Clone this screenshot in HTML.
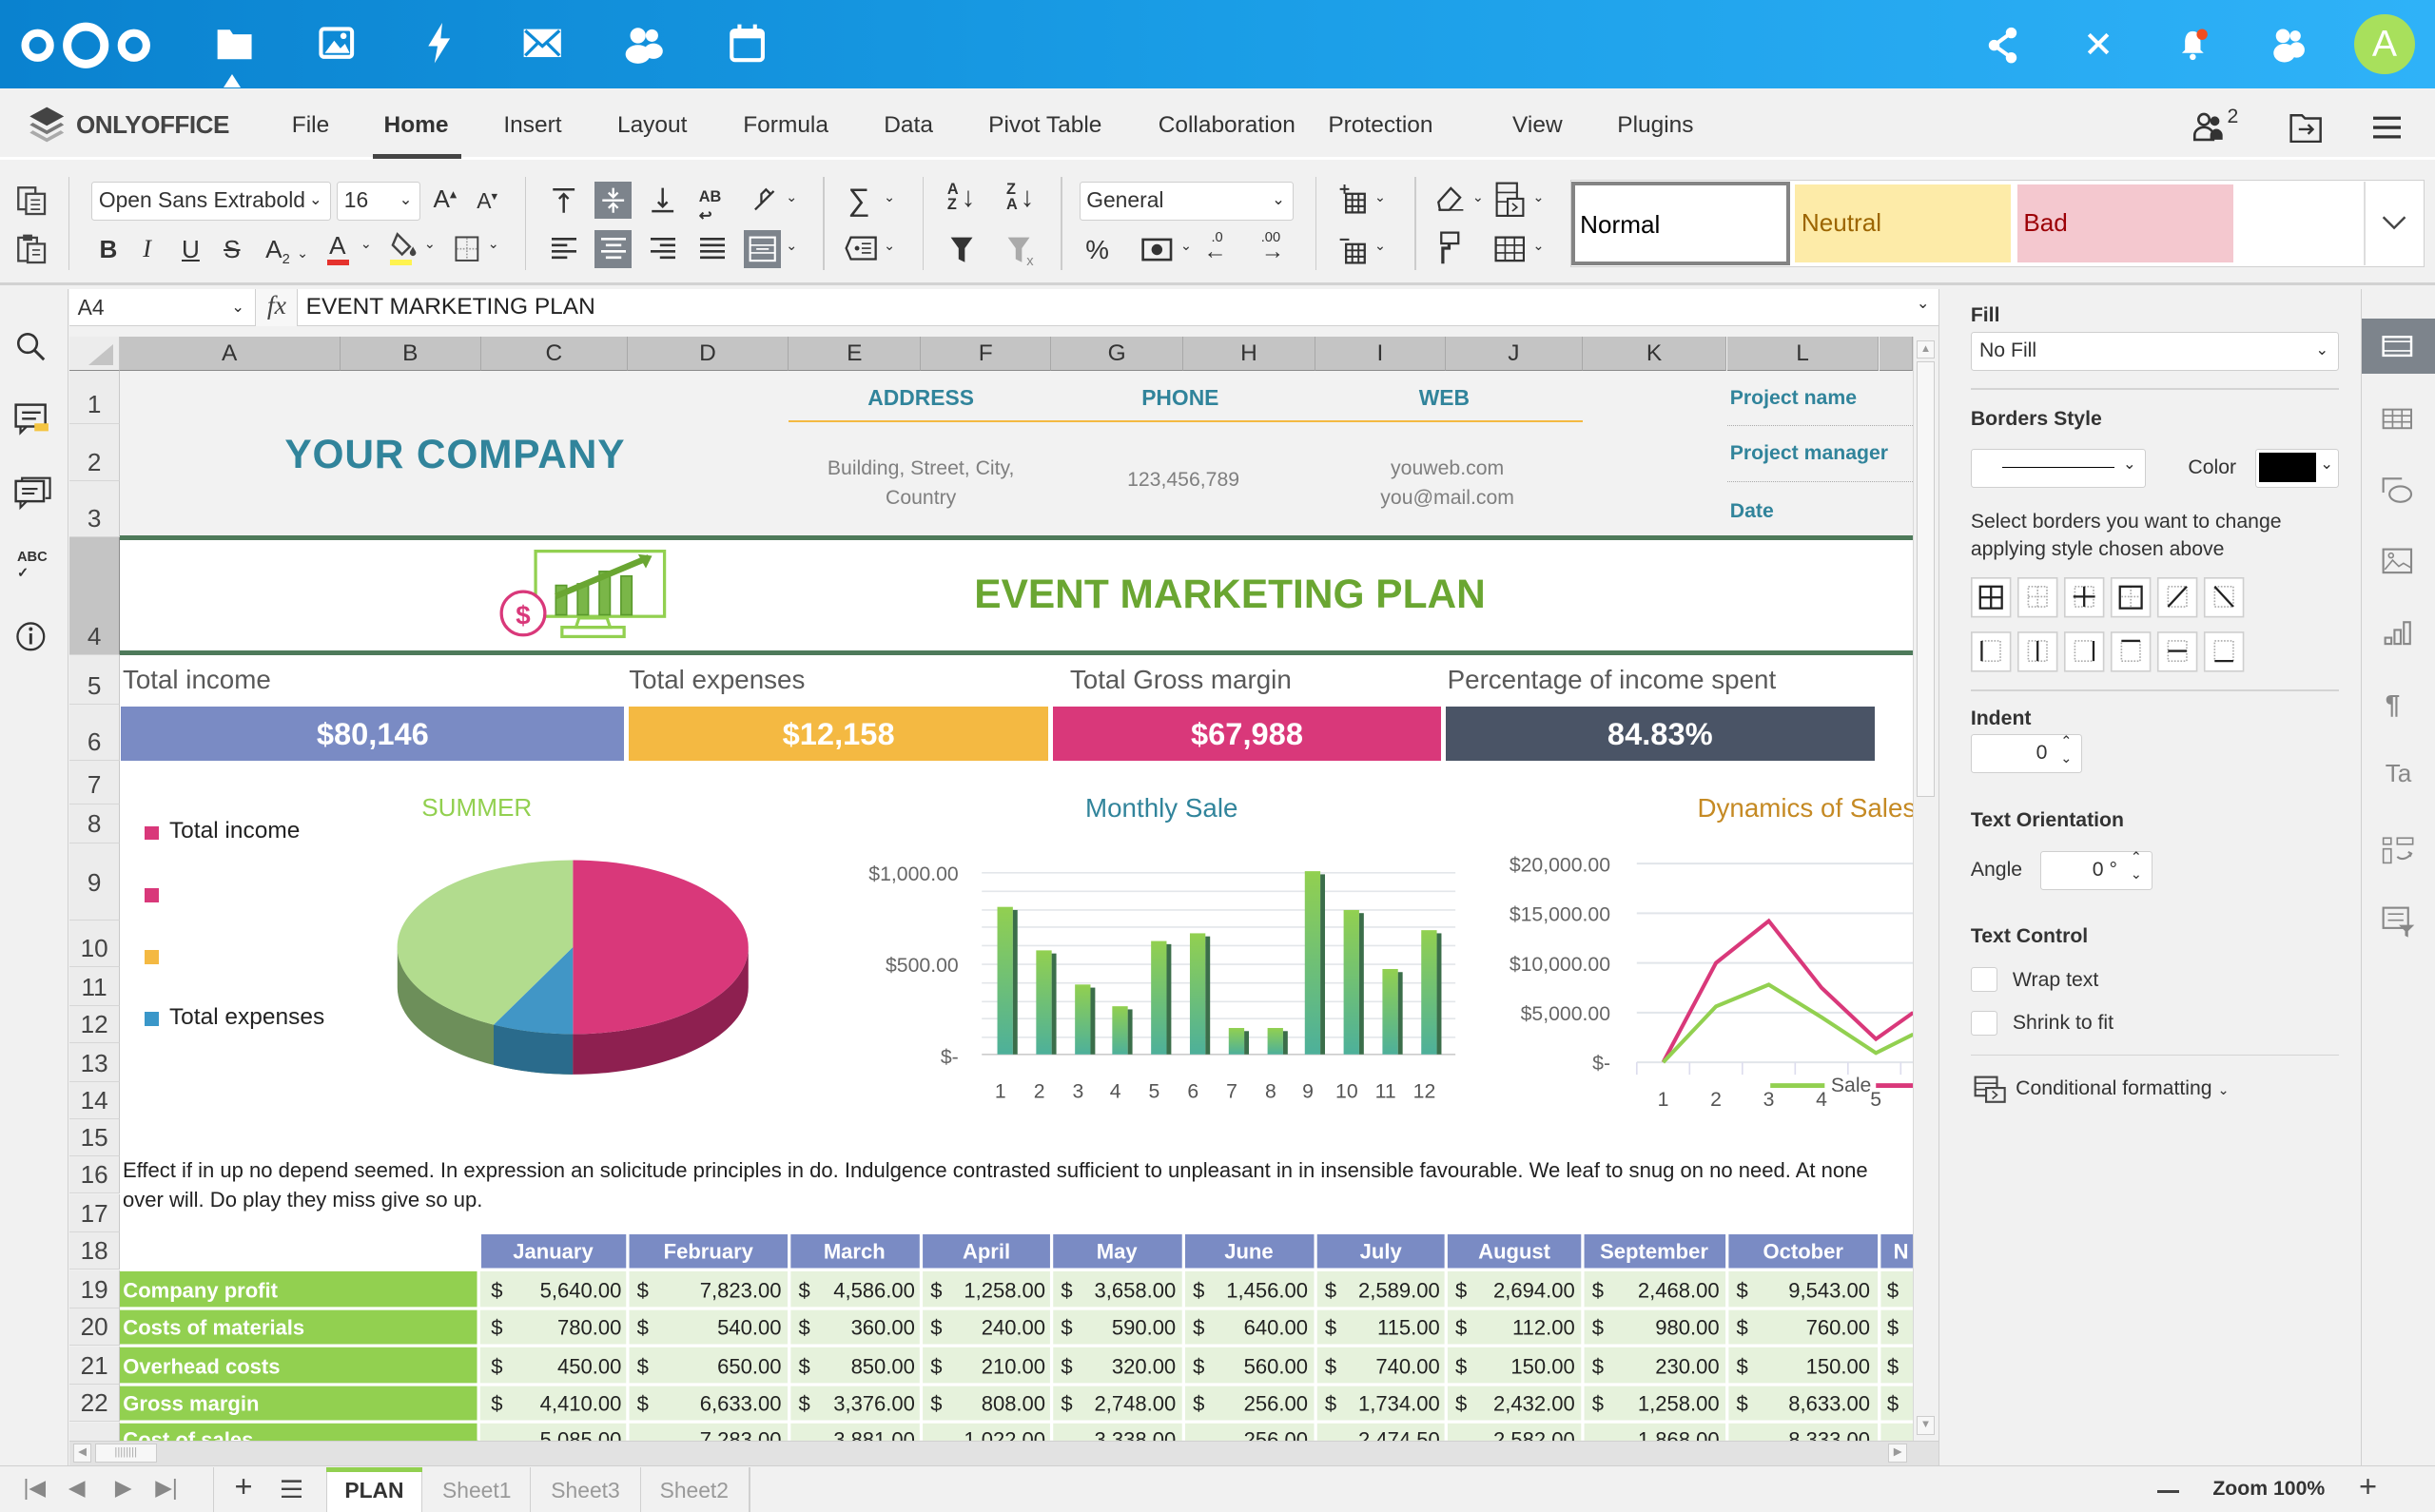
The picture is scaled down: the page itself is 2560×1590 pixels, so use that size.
<!DOCTYPE html>
<html><head><meta charset="utf-8"><style>
*{margin:0;padding:0;box-sizing:border-box}
html,body{width:2560px;height:1590px;overflow:hidden;background:#f1f1f1}
#w{zoom:1.63265;width:1568px;height:974px;position:relative;font-family:"Liberation Sans",sans-serif;color:#333;overflow:hidden}
.a{position:absolute}
.t{position:absolute;white-space:nowrap}
.c{transform:translateX(-50%)}
.rh{position:absolute;left:45px;width:32px;background:#ececec;border-bottom:1px solid #d6d6d6;border-right:1px solid #c8c8c8;font-size:16px;color:#444;text-align:center;display:flex;align-items:flex-end;justify-content:center;padding-bottom:2px}
.ch{position:absolute;top:217px;height:22px;background:#c4c4c4;border-right:1px solid #a8a8a8;border-bottom:1px solid #8a8a8a;font-size:15px;color:#333;text-align:center;line-height:22px}
.mn{position:absolute;top:72px;font-size:15px;color:#333}
.num{position:absolute;font-size:13.5px;color:#222}
.box{position:absolute;background:#fff;border:1px solid #cfcfcf;border-radius:2px}
.bb{position:absolute;width:24px;height:24px;background:#fff;border:1px solid #cfcfcf;border-radius:2px}
.lbl{position:absolute;font-size:13px;font-weight:bold;color:#333}
.ic{position:absolute}
</style></head><body><div id="w">

<!-- top nextcloud bar -->
<div class="a" style="left:0;top:0;width:1568px;height:57px;background:linear-gradient(90deg,#0a82cf,#1a9de6 50%,#2fb2f8)"></div>
<svg class="ic" style="left:12px;top:12px" width="86" height="34" viewBox="0 0 86 34"><circle cx="12" cy="17" r="8" fill="none" stroke="#fff" stroke-width="5"/><circle cx="43" cy="17" r="12" fill="none" stroke="#fff" stroke-width="5.5"/><circle cx="74" cy="17" r="8" fill="none" stroke="#fff" stroke-width="5"/></svg>
<svg class="ic" style="left:139px;top:17px" width="24" height="22"><path d="M1 2h8l2 3h12v16H1z" fill="#fff"/></svg>
<div class="a" style="left:144px;top:48px;width:0;height:0;border-left:6px solid transparent;border-right:6px solid transparent;border-bottom:9px solid #fff"></div>
<svg class="ic" style="left:205px;top:17px" width="24" height="22"><rect x="1.5" y="1.5" width="20" height="18" rx="2" fill="none" stroke="#fff" stroke-width="2.5"/><path d="M4 17l6-8 4 5 3-3 3 6z" fill="#fff"/><circle cx="16" cy="6" r="2" fill="#fff"/></svg>
<svg class="ic" style="left:274px;top:15px" width="18" height="26"><path d="M11 0L2 15h6l-2 11 10-16h-6z" fill="#fff"/></svg>
<svg class="ic" style="left:336px;top:18px" width="26" height="20"><rect x="1" y="1" width="24" height="18" fill="#fff"/><path d="M2 2l11 10 11-10M2 18l8-8M24 18l-8-8" stroke="#0d8ad6" stroke-width="2" fill="none"/></svg>
<svg class="ic" style="left:402px;top:16px" width="26" height="26"><circle cx="9" cy="7" r="5" fill="#fff"/><circle cx="18" cy="7" r="4" fill="#fff"/><ellipse cx="9" cy="19" rx="8" ry="6" fill="#fff"/><ellipse cx="19" cy="17" rx="6" ry="5" fill="#fff"/></svg>
<svg class="ic" style="left:469px;top:15px" width="24" height="26"><rect x="2" y="5" width="20" height="19" rx="2" fill="none" stroke="#fff" stroke-width="2.5"/><rect x="2" y="5" width="20" height="5" fill="#fff"/><path d="M7 1v6M17 1v6" stroke="#fff" stroke-width="2.5"/></svg>
<svg class="ic" style="left:1280px;top:17px" width="20" height="24"><circle cx="15" cy="4" r="3.5" fill="#fff"/><circle cx="4" cy="12" r="3.5" fill="#fff"/><circle cx="15" cy="20" r="3.5" fill="#fff"/><path d="M15 4L4 12l11 8" stroke="#fff" stroke-width="2.5" fill="none"/></svg>
<svg class="ic" style="left:1343px;top:20px" width="16" height="16"><path d="M2 2l12 12M14 2L2 14" stroke="#fff" stroke-width="2.5"/></svg>
<svg class="ic" style="left:1402px;top:17px" width="22" height="22"><path d="M10 3c-4 0-5 4-5 7v5l-2 2h14l-2-2v-5c0-3-1-7-5-7z" fill="#fff"/><circle cx="10" cy="19.5" r="2" fill="#fff"/><circle cx="16" cy="5" r="3.5" fill="#f24d1f"/></svg>
<svg class="ic" style="left:1462px;top:17px" width="24" height="24"><circle cx="8" cy="6" r="4.5" fill="#fff"/><circle cx="16" cy="6" r="3.5" fill="#fff"/><ellipse cx="9" cy="17" rx="7" ry="6" fill="#fff"/><ellipse cx="17" cy="15" rx="5" ry="5" fill="#fff"/></svg>
<div class="a" style="left:1516px;top:9px;width:39px;height:39px;border-radius:50%;background:#a8e05c;color:#fff;font-size:24px;text-align:center;line-height:39px">A</div>

<!-- menu bar -->
<div class="a" style="left:0;top:57px;width:1568px;height:46px;background:#f1f1f1;border-bottom:2px solid #fff"></div>
<svg class="ic" style="left:17px;top:68px" width="26" height="26"><path d="M13 1l11 6-11 6L2 7z" fill="#444"/><path d="M4 11l9 5 9-5 2 1.5-11 6-11-6z" fill="#777"/><path d="M4 16l9 5 9-5 2 1.5-11 6-11-6z" fill="#aaa"/></svg>
<div class="t" style="left:49px;top:71px;font-size:16px;font-weight:bold;color:#444;letter-spacing:-0.3px">ONLYOFFICE</div>
<div class="mn c" style="left:200px">File</div>
<div class="mn c" style="left:268px;font-weight:bold">Home</div>
<div class="a" style="left:240px;top:99px;width:57px;height:3px;background:#444"></div>
<div class="mn c" style="left:343px">Insert</div>
<div class="mn c" style="left:420px">Layout</div>
<div class="mn c" style="left:506px">Formula</div>
<div class="mn c" style="left:585px">Data</div>
<div class="mn c" style="left:673px">Pivot Table</div>
<div class="mn c" style="left:790px">Collaboration</div>
<div class="mn c" style="left:889px">Protection</div>
<div class="mn c" style="left:990px">View</div>
<div class="mn c" style="left:1066px">Plugins</div>
<svg class="ic" style="left:1411px;top:68px" width="34" height="24"><circle cx="8" cy="9" r="3.5" fill="none" stroke="#333" stroke-width="1.6"/><path d="M2 22v-3c0-3 3-5 6-5s6 2 6 5v3z" fill="none" stroke="#333" stroke-width="1.6"/><circle cx="15" cy="10" r="3" fill="#333"/><path d="M12 22v-3c0-2 2-4 4-4s4 2 4 4v3z" fill="#333"/><text x="23" y="11" font-size="13" font-family="Liberation Sans" fill="#333">2</text></svg>
<svg class="ic" style="left:1474px;top:72px" width="22" height="20"><path d="M1 2h7l2 2h10v15H1z" fill="none" stroke="#333" stroke-width="1.5"/><path d="M6 11h9M12 8l3 3-3 3" stroke="#333" stroke-width="1.5" fill="none"/></svg>
<svg class="ic" style="left:1528px;top:74px" width="18" height="16"><path d="M0 2h18M0 8h18M0 14h18" stroke="#333" stroke-width="2"/></svg>

<!-- toolbar -->
<div class="a" style="left:0;top:104px;width:1568px;height:80px;background:#f1f1f1;border-bottom:2px solid #d2d2d2"></div>
<svg class="ic" style="left:10px;top:119px" width="22" height="20"><rect x="2" y="2" width="11" height="14" fill="none" stroke="#444" stroke-width="1.4"/><rect x="7" y="6" width="12" height="13" fill="#f1f1f1" stroke="#444" stroke-width="1.4"/><path d="M10 10h6M10 13h6M10 16h6" stroke="#444"/></svg>
<svg class="ic" style="left:10px;top:150px" width="22" height="20"><rect x="2" y="3" width="12" height="15" fill="none" stroke="#444" stroke-width="1.4"/><rect x="5" y="1" width="6" height="4" fill="#444"/><rect x="8" y="7" width="11" height="12" fill="#f1f1f1" stroke="#444" stroke-width="1.4"/><path d="M11 11h5M11 14h5" stroke="#444"/></svg>
<div class="a" style="left:44px;top:114px;width:1px;height:60px;background:#ccc"></div>
<div class="box" style="left:59px;top:117px;width:154px;height:25px;font-size:14px;line-height:23px;padding-left:4px">Open Sans Extrabold<span style="position:absolute;right:5px;font-size:10px">&#8964;</span></div>
<div class="box" style="left:217px;top:117px;width:54px;height:25px;font-size:14px;line-height:23px;padding-left:4px">16<span style="position:absolute;right:5px;font-size:10px">&#8964;</span></div>
<div class="t" style="left:279px;top:119px;font-size:16px">A<sup style="font-size:9px">▴</sup></div>
<div class="t" style="left:307px;top:121px;font-size:14px">A<sup style="font-size:8px">▾</sup></div>
<div class="t" style="left:64px;top:151px;font-size:16px;font-weight:bold">B</div>
<div class="t" style="left:92px;top:151px;font-size:16px;font-style:italic;font-family:'Liberation Serif'">I</div>
<div class="t" style="left:117px;top:151px;font-size:16px;text-decoration:underline">U</div>
<div class="t" style="left:144px;top:151px;font-size:16px;text-decoration:line-through">S</div>
<div class="t" style="left:171px;top:151px;font-size:16px">A<sub style="font-size:9px">2</sub> <span style="font-size:9px">&#8964;</span></div>
<div class="t" style="left:212px;top:149px;font-size:16px">A</div><div class="a" style="left:211px;top:167px;width:14px;height:4px;background:#e5322d"></div><div class="t" style="left:232px;top:152px;font-size:9px">&#8964;</div>
<svg class="ic" style="left:250px;top:149px" width="20" height="18"><path d="M6 2l8 8-5 5-6-6z" fill="none" stroke="#444" stroke-width="1.5"/><path d="M16 10c1 2 2 3 2 4s-1 2-2 2-2-1-2-2 1-2 2-4z" fill="#444"/></svg><div class="a" style="left:251px;top:167px;width:14px;height:4px;background:#fff34f"></div><div class="t" style="left:273px;top:152px;font-size:9px">&#8964;</div>
<svg class="ic" style="left:292px;top:151px" width="18" height="18"><rect x="1.5" y="1.5" width="14" height="15" fill="none" stroke="#444" stroke-width="1.2"/><path d="M8.5 2v14M2 9h13" stroke="#999" stroke-dasharray="1 1"/></svg><div class="t" style="left:314px;top:152px;font-size:9px">&#8964;</div>
<div class="a" style="left:338px;top:114px;width:1px;height:60px;background:#ccc"></div>
<!-- alignment -->
<svg class="ic" style="left:354px;top:120px" width="18" height="18"><path d="M2 2h14M9 5v12M6 8l3-3 3 3" stroke="#333" stroke-width="1.5" fill="none"/></svg>
<div class="a" style="left:383px;top:117px;width:24px;height:24px;background:#7d848c"></div>
<svg class="ic" style="left:386px;top:120px" width="18" height="18"><path d="M2 9h14M9 1v6M9 11v6M6 4l3 3 3-3M6 14l3-3 3 3" stroke="#fff" stroke-width="1.4" fill="none"/></svg>
<svg class="ic" style="left:418px;top:120px" width="18" height="18"><path d="M2 16h14M9 1v12M6 10l3 3 3-3" stroke="#333" stroke-width="1.5" fill="none"/></svg>
<div class="t" style="left:450px;top:121px;font-size:10px;font-weight:bold">AB<br><span style="font-size:10px">↩</span></div>
<svg class="ic" style="left:483px;top:120px" width="18" height="18"><path d="M3 15l12-12M7 5l3-3 3 3-6 6z" stroke="#333" stroke-width="1.4" fill="none"/></svg><div class="t" style="left:506px;top:122px;font-size:9px">&#8964;</div>
<svg class="ic" style="left:355px;top:152px" width="16" height="16"><path d="M0 2h16M0 6h10M0 10h16M0 14h10" stroke="#333" stroke-width="1.6"/></svg>
<div class="a" style="left:383px;top:148px;width:24px;height:25px;background:#7d848c"></div>
<svg class="ic" style="left:387px;top:152px" width="16" height="16"><path d="M0 2h16M3 6h10M0 10h16M3 14h10" stroke="#fff" stroke-width="1.6"/></svg>
<svg class="ic" style="left:419px;top:152px" width="16" height="16"><path d="M0 2h16M6 6h10M0 10h16M6 14h10" stroke="#333" stroke-width="1.6"/></svg>
<svg class="ic" style="left:451px;top:152px" width="16" height="16"><path d="M0 2h16M0 6h16M0 10h16M0 14h16" stroke="#333" stroke-width="1.6"/></svg>
<div class="a" style="left:479px;top:148px;width:24px;height:25px;background:#7d848c"></div>
<svg class="ic" style="left:482px;top:152px" width="18" height="18"><rect x="1" y="1" width="16" height="15" fill="none" stroke="#fff" stroke-width="1.3"/><path d="M1 6h16M1 11h16M5 8.5h8" stroke="#fff"/></svg><div class="t" style="left:506px;top:153px;font-size:9px">&#8964;</div>
<div class="a" style="left:530px;top:114px;width:1px;height:60px;background:#ccc"></div>
<div class="t" style="left:546px;top:117px;font-size:20px">∑</div><div class="t" style="left:569px;top:122px;font-size:9px">&#8964;</div>
<svg class="ic" style="left:544px;top:152px" width="22" height="16"><path d="M4 1h16v14H4L1 8z" fill="none" stroke="#333" stroke-width="1.4"/><circle cx="8" cy="8" r="1.5" fill="#333"/><path d="M11 5h6M11 8h6M11 11h6" stroke="#333"/></svg><div class="t" style="left:569px;top:153px;font-size:9px">&#8964;</div>
<div class="a" style="left:594px;top:114px;width:1px;height:60px;background:#ccc"></div>
<div class="t" style="left:610px;top:117px;font-size:10px;line-height:10px;font-weight:bold">A<br>Z</div><div class="t" style="left:619px;top:117px;font-size:18px">↓</div>
<div class="t" style="left:648px;top:117px;font-size:10px;line-height:10px;font-weight:bold">Z<br>A</div><div class="t" style="left:657px;top:117px;font-size:18px">↓</div>
<svg class="ic" style="left:611px;top:152px" width="16" height="18"><path d="M1 1h14l-5 7v9l-4-2V8z" fill="#333"/></svg>
<svg class="ic" style="left:648px;top:152px" width="20" height="20"><path d="M1 1h14l-5 7v9l-4-2V8z" fill="#aaa"/><text x="13" y="19" font-size="9" fill="#888" font-family="Liberation Sans">x</text></svg>
<div class="a" style="left:683px;top:114px;width:1px;height:60px;background:#ccc"></div>
<div class="box" style="left:695px;top:117px;width:138px;height:25px;font-size:14px;line-height:23px;padding-left:4px">General<span style="position:absolute;right:5px;font-size:10px">&#8964;</span></div>
<div class="t" style="left:699px;top:151px;font-size:17px">%</div>
<svg class="ic" style="left:735px;top:151px" width="22" height="18"><rect x="1" y="3" width="18" height="13" fill="none" stroke="#333" stroke-width="1.6"/><circle cx="10" cy="9.5" r="3.5" fill="#333"/></svg><div class="t" style="left:760px;top:153px;font-size:9px">&#8964;</div>
<div class="t" style="left:775px;top:149px;font-size:9px;line-height:9px">&nbsp;&nbsp;.0<br><span style="font-size:15px">←</span></div>
<div class="t" style="left:812px;top:149px;font-size:9px;line-height:9px">.00<br><span style="font-size:15px">→</span></div>
<div class="a" style="left:847px;top:114px;width:1px;height:60px;background:#ccc"></div>
<svg class="ic" style="left:862px;top:119px" width="20" height="20"><rect x="5" y="6" width="12" height="12" fill="none" stroke="#333" stroke-width="1.4"/><path d="M5 10h12M5 14h12M9 6v12M13 6v12M1 3h6M4 0v6" stroke="#333" stroke-width="1.2"/></svg><div class="t" style="left:885px;top:122px;font-size:9px">&#8964;</div>
<svg class="ic" style="left:862px;top:151px" width="20" height="20"><rect x="5" y="6" width="12" height="12" fill="none" stroke="#333" stroke-width="1.4"/><path d="M5 10h12M5 14h12M9 6v12M13 6v12M1 3h6" stroke="#333" stroke-width="1.2"/></svg><div class="t" style="left:885px;top:153px;font-size:9px">&#8964;</div>
<div class="a" style="left:911px;top:114px;width:1px;height:60px;background:#ccc"></div>
<svg class="ic" style="left:924px;top:118px" width="20" height="20"><path d="M3 17l-1-5 8-9 6 6-7 8z" fill="none" stroke="#333" stroke-width="1.4"/><path d="M2 17h16" stroke="#333"/></svg><div class="t" style="left:948px;top:122px;font-size:9px">&#8964;</div>
<svg class="ic" style="left:963px;top:117px" width="22" height="24"><rect x="1" y="1" width="13" height="21" fill="none" stroke="#333" stroke-width="1.3"/><path d="M1 7h13M1 13h13" stroke="#333"/><rect x="8" y="11" width="10" height="11" fill="#f1f1f1" stroke="#333" stroke-width="1.3"/><path d="M11 14l3 2.5-3 2.5" stroke="#333" fill="none"/></svg><div class="t" style="left:987px;top:122px;font-size:9px">&#8964;</div>
<svg class="ic" style="left:926px;top:149px" width="16" height="22"><rect x="2" y="1" width="11" height="7" fill="none" stroke="#333" stroke-width="1.4"/><path d="M7 8v3H3v10" stroke="#333" stroke-width="2" fill="none"/></svg>
<svg class="ic" style="left:962px;top:152px" width="20" height="18"><rect x="1" y="1" width="18" height="15" fill="none" stroke="#333" stroke-width="1.4"/><path d="M1 6h18M1 11h18M7 1v15M13 1v15" stroke="#333"/></svg><div class="t" style="left:987px;top:153px;font-size:9px">&#8964;</div>
<!-- style gallery -->
<div class="a" style="left:1011px;top:116px;width:550px;height:56px;background:#fff;border:1px solid #d0d0d0"></div>
<div class="a" style="left:1012px;top:117px;width:141px;height:54px;border:3px solid #848484;background:#fff;font-size:16px;color:#000;padding:16px 0 0 3px">Normal</div>
<div class="a" style="left:1156px;top:119px;width:139px;height:50px;background:#fdeba8;font-size:16px;color:#9c6500;padding:15px 0 0 4px">Neutral</div>
<div class="a" style="left:1299px;top:119px;width:139px;height:50px;background:#f4c8cf;font-size:16px;color:#9c0006;padding:15px 0 0 4px">Bad</div>
<div class="a" style="left:1522px;top:117px;width:1px;height:54px;background:#ddd"></div>
<svg class="ic" style="left:1534px;top:138px" width="16" height="12"><path d="M1 2l7 7 7-7" stroke="#444" stroke-width="1.5" fill="none"/></svg>

<!-- left sidebar -->
<div class="a" style="left:0;top:186px;width:44px;height:758px;background:#f1f1f1;border-right:1px solid #d0d0d0"></div>
<svg class="ic" style="left:10px;top:213px" width="20" height="20"><circle cx="8" cy="8" r="6" fill="none" stroke="#333" stroke-width="1.6"/><path d="M12.5 12.5l6 6" stroke="#333" stroke-width="1.8"/></svg>
<svg class="ic" style="left:9px;top:260px" width="24" height="22"><rect x="1" y="1" width="19" height="14" fill="none" stroke="#333" stroke-width="1.5"/><path d="M4 15v4l4-4M5 6h12M5 10h9" stroke="#333" stroke-width="1.4" fill="none"/><rect x="13" y="13" width="9" height="5" fill="#f4c542"/></svg>
<svg class="ic" style="left:9px;top:307px" width="24" height="22"><rect x="1" y="3" width="18" height="13" fill="none" stroke="#333" stroke-width="1.5"/><path d="M4 16v4l4-4M5 8h10M5 11h8M5 3V1h18v13h-3" stroke="#333" stroke-width="1.3" fill="none"/></svg>
<div class="t" style="left:11px;top:354px;font-size:9px;font-weight:bold;color:#333">ABC<br><span style="font-size:9px">✓</span></div>
<svg class="ic" style="left:10px;top:400px" width="20" height="20"><circle cx="10" cy="10" r="8.5" fill="none" stroke="#333" stroke-width="1.4"/><path d="M10 8v7" stroke="#333" stroke-width="1.8"/><circle cx="10" cy="5.2" r="1.2" fill="#333"/></svg>

<!-- formula bar -->
<div class="a" style="left:45px;top:186px;width:1203px;height:24px;background:#fff;border-bottom:1px solid #d0d0d0"></div>
<div class="a" style="left:45px;top:186px;width:120px;height:24px;border-right:1px solid #d0d0d0;font-size:14px;line-height:24px;padding-left:5px">A4<span style="position:absolute;left:104px;font-size:10px">&#8964;</span></div>
<div class="a" style="left:165px;top:186px;width:27px;height:24px;border-right:1px solid #d0d0d0;background:#f7f7f7;font-family:'Liberation Serif';font-style:italic;font-size:17px;line-height:22px;text-align:center;color:#444">fx</div>
<div class="t" style="left:197px;top:189px;font-size:15px;color:#222">EVENT MARKETING PLAN</div>
<div class="t" style="left:1234px;top:189px;font-size:10px">&#8964;</div>
<div class="a" style="left:45px;top:210px;width:1203px;height:7px;background:#f1f1f1"></div>

<!-- sheet background -->
<div class="a" style="left:77px;top:239px;width:1155px;height:689px;background:#fff"></div>
<!-- corner -->
<div class="a" style="left:45px;top:217px;width:32px;height:22px;background:#ececec;border-right:1px solid #c8c8c8;border-bottom:1px solid #8a8a8a"></div>
<div class="a" style="left:57px;top:222px;width:0;height:0;border-left:16px solid transparent;border-bottom:14px solid #c4c4c4"></div>
<!-- column headers -->
<div class="ch" style="left:77px;width:142px">A</div>
<div class="ch" style="left:219px;width:91px">B</div>
<div class="ch" style="left:310px;width:94px">C</div>
<div class="ch" style="left:404px;width:104px">D</div>
<div class="ch" style="left:508px;width:85px">E</div>
<div class="ch" style="left:593px;width:84px">F</div>
<div class="ch" style="left:677px;width:85px">G</div>
<div class="ch" style="left:762px;width:85px">H</div>
<div class="ch" style="left:847px;width:84px">I</div>
<div class="ch" style="left:931px;width:88px">J</div>
<div class="ch" style="left:1019px;width:93px">K</div>
<div class="ch" style="left:1112px;width:98px">L</div>
<div class="ch" style="left:1210px;width:22px"></div>
<!-- row headers -->
<div class="rh" style="top:239px;height:34px">1</div>
<div class="rh" style="top:273px;height:37px">2</div>
<div class="rh" style="top:310px;height:36px">3</div>
<div class="rh" style="top:346px;height:76px;background:#c4c4c4;border-right:1px solid #8a8a8a">4</div>
<div class="rh" style="top:422px;height:32px">5</div>
<div class="rh" style="top:454px;height:36px">6</div>
<div class="rh" style="top:490px;height:28px">7</div>
<div class="rh" style="top:518px;height:25px">8</div>
<div class="rh" style="top:543px;height:50px;padding-bottom:14px">9</div>
<div class="rh" style="top:593px;height:30px">10</div>
<div class="rh" style="top:623px;height:25px">11</div>
<div class="rh" style="top:648px;height:24px">12</div>
<div class="rh" style="top:672px;height:25px">13</div>
<div class="rh" style="top:697px;height:24px">14</div>
<div class="rh" style="top:721px;height:24px">15</div>
<div class="rh" style="top:745px;height:24px">16</div>
<div class="rh" style="top:769px;height:25px">17</div>
<div class="rh" style="top:794px;height:24px">18</div>
<div class="rh" style="top:818px;height:25px">19</div>
<div class="rh" style="top:843px;height:24px">20</div>
<div class="rh" style="top:867px;height:25px">21</div>
<div class="rh" style="top:892px;height:24px">22</div>
<div class="rh" style="top:916px;height:12px;border-bottom:none"></div>

<!-- rows 1-3 header band -->
<div class="a" style="left:77px;top:239px;width:1155px;height:107px;background:#f2f2f2"></div>
<div class="t c" style="left:293px;top:278px;font-size:26px;font-weight:bold;color:#31849b;letter-spacing:0.5px">YOUR COMPANY</div>
<div class="t c" style="left:593px;top:248px;font-size:14px;font-weight:bold;color:#31849b">ADDRESS</div>
<div class="t c" style="left:760px;top:248px;font-size:14px;font-weight:bold;color:#31849b">PHONE</div>
<div class="t c" style="left:930px;top:248px;font-size:14px;font-weight:bold;color:#31849b">WEB</div>
<div class="a" style="left:508px;top:271px;width:511px;height:1px;background:#f4b942"></div>
<div class="t c" style="left:593px;top:292px;font-size:13px;color:#7f7f7f;text-align:center;line-height:19px">Building, Street, City,<br>Country</div>
<div class="t c" style="left:762px;top:302px;font-size:13px;color:#7f7f7f">123,456,789</div>
<div class="t c" style="left:932px;top:292px;font-size:13px;color:#7f7f7f;text-align:center;line-height:19px">youweb.com<br>you@mail.com</div>
<div class="t" style="left:1114px;top:249px;font-size:13px;font-weight:bold;color:#31849b">Project name</div>
<div class="t" style="left:1114px;top:285px;font-size:13px;font-weight:bold;color:#31849b">Project manager</div>
<div class="t" style="left:1114px;top:322px;font-size:13px;font-weight:bold;color:#31849b">Date</div>
<div class="a" style="left:1112px;top:274px;width:120px;border-top:1px dotted #aaa"></div>
<div class="a" style="left:1112px;top:310px;width:120px;border-top:1px dotted #aaa"></div>

<!-- row 4 -->
<div class="a" style="left:77px;top:345px;width:1155px;height:3px;background:#4e7a5a"></div>
<div class="a" style="left:77px;top:419px;width:1155px;height:3px;background:#4e7a5a"></div>
<svg class="ic" style="left:318px;top:354px" width="114" height="60"><rect x="27" y="1" width="83" height="42" fill="none" stroke="#92d050" stroke-width="2"/><rect x="40" y="23" width="7" height="19" fill="#7ab648" stroke="#5a9a2c"/><rect x="54" y="22" width="7" height="20" fill="#7ab648" stroke="#5a9a2c"/><rect x="68" y="14" width="7" height="28" fill="#7ab648" stroke="#5a9a2c"/><rect x="82" y="17" width="7" height="25" fill="#7ab648" stroke="#5a9a2c"/><path d="M40 30L100 5" stroke="#6aa632" stroke-width="4"/><path d="M93 3l9 1-4 8z" fill="#6aa632"/><path d="M55 44h18l2 6H53z" fill="none" stroke="#92d050" stroke-width="2"/><rect x="44" y="50" width="40" height="6" fill="none" stroke="#92d050" stroke-width="2"/><circle cx="19" cy="41" r="14" fill="#fff" stroke="#d9387a" stroke-width="2"/><text x="19" y="48" text-anchor="middle" font-size="17" font-weight="bold" fill="#d9387a" font-family="Liberation Sans">$</text></svg>
<div class="t c" style="left:792px;top:368px;font-size:26px;font-weight:bold;color:#6aa632">EVENT MARKETING PLAN</div>

<!-- row 5/6 -->
<div class="t" style="left:79px;top:428px;font-size:17px;color:#595959">Total income</div>
<div class="t" style="left:405px;top:428px;font-size:17px;color:#595959">Total expenses</div>
<div class="t" style="left:689px;top:428px;font-size:17px;color:#595959">Total Gross margin</div>
<div class="t" style="left:932px;top:428px;font-size:17px;color:#595959">Percentage of income spent</div>
<div class="a" style="left:78px;top:455px;width:324px;height:35px;background:#7a8bc4;color:#fff;font-size:20px;font-weight:bold;text-align:center;line-height:35px">$80,146</div>
<div class="a" style="left:405px;top:455px;width:270px;height:35px;background:#f4b942;color:#fff;font-size:20px;font-weight:bold;text-align:center;line-height:35px">$12,158</div>
<div class="a" style="left:678px;top:455px;width:250px;height:35px;background:#d9387a;color:#fff;font-size:20px;font-weight:bold;text-align:center;line-height:35px">$67,988</div>
<div class="a" style="left:931px;top:455px;width:276px;height:35px;background:#4a5466;color:#fff;font-size:20px;font-weight:bold;text-align:center;line-height:35px">84.83%</div>

<!-- pie chart -->
<div class="t c" style="left:307px;top:511px;font-size:16px;color:#92d050">SUMMER</div>
<div class="a" style="left:93px;top:532px;width:9px;height:9px;background:#d9387a"></div><div class="t" style="left:109px;top:527px;font-size:15px;color:#222">Total income</div>
<div class="a" style="left:93px;top:572px;width:9px;height:9px;background:#d9387a"></div>
<div class="a" style="left:93px;top:612px;width:9px;height:9px;background:#f4b942"></div>
<div class="a" style="left:93px;top:652px;width:9px;height:9px;background:#3a97c9"></div><div class="t" style="left:109px;top:647px;font-size:15px;color:#222">Total expenses</div>
<svg class="ic" style="left:250px;top:550px" width="240" height="150" viewBox="250 550 240 150">
<path d="M256 610 A113 56 0 0 0 369 666 L369 692 A113 56 0 0 1 256 636Z" fill="#6d8f5a"/>
<path d="M318 660 A113 56 0 0 0 369 666 L369 692 A113 56 0 0 1 318 686Z" fill="#2a6b8c"/>
<path d="M369 666 A113 56 0 0 0 482 610 L482 636 A113 56 0 0 1 369 692Z" fill="#8e2050"/>
<path d="M369 610 L369 554 A113 56 0 0 1 369 666Z" fill="#d9387a"/>
<path d="M369 610 L369 666 A113 56 0 0 1 318 660Z" fill="#4196c6"/>
<path d="M369 610 L318 660 A113 56 0 0 1 369 554Z" fill="#b2dc8e"/>
</svg>

<!-- bar chart -->
<div class="t c" style="left:748px;top:511px;font-size:17px;color:#31849b">Monthly Sale</div>
<svg class="ic" style="left:540px;top:545px" width="410" height="170" viewBox="540 545 410 170">
<g stroke="#e3e6ea" stroke-width="1"><path d="M632 562h305M632 574h305M632 586h305M632 597h305M632 609h305M632 621h305M632 633h305M632 645h305M632 656h305M632 668h305"/></g>
<path d="M632 679h305" stroke="#ccc"/>
<g font-family="Liberation Sans" font-size="13" fill="#666" text-anchor="end"><text x="617" y="567">$1,000.00</text><text x="617" y="626">$500.00</text><text x="617" y="685">$-</text></g>
<defs><linearGradient id="bg" x1="0" y1="0" x2="0" y2="1"><stop offset="0" stop-color="#92d050"/><stop offset="1" stop-color="#4db09a"/></linearGradient></defs>
<g id="bars">
<rect x="642" y="584" width="10" height="95" fill="url(#bg)"/><rect x="667" y="612" width="10" height="67" fill="url(#bg)"/><rect x="692" y="634" width="10" height="45" fill="url(#bg)"/><rect x="716" y="648" width="10" height="31" fill="url(#bg)"/><rect x="741" y="606" width="10" height="73" fill="url(#bg)"/><rect x="766" y="601" width="10" height="78" fill="url(#bg)"/><rect x="791" y="662" width="10" height="17" fill="url(#bg)"/><rect x="816" y="662" width="10" height="17" fill="url(#bg)"/><rect x="840" y="561" width="10" height="118" fill="url(#bg)"/><rect x="865" y="586" width="10" height="93" fill="url(#bg)"/><rect x="890" y="624" width="10" height="55" fill="url(#bg)"/><rect x="915" y="599" width="10" height="80" fill="url(#bg)"/>
</g>
<g fill="#3b6e4a"><rect x="652" y="586" width="3" height="93"/><rect x="677" y="614" width="3" height="65"/><rect x="702" y="636" width="3" height="43"/><rect x="726" y="650" width="3" height="29"/><rect x="751" y="608" width="3" height="71"/><rect x="776" y="603" width="3" height="76"/><rect x="801" y="664" width="3" height="15"/><rect x="826" y="664" width="3" height="15"/><rect x="850" y="563" width="3" height="116"/><rect x="875" y="588" width="3" height="91"/><rect x="900" y="626" width="3" height="53"/><rect x="925" y="601" width="3" height="78"/></g>
<g font-family="Liberation Sans" font-size="13" fill="#555" text-anchor="middle"><text x="644" y="707">1</text><text x="669" y="707">2</text><text x="694" y="707">3</text><text x="718" y="707">4</text><text x="743" y="707">5</text><text x="768" y="707">6</text><text x="793" y="707">7</text><text x="818" y="707">8</text><text x="842" y="707">9</text><text x="867" y="707">10</text><text x="892" y="707">11</text><text x="917" y="707">12</text></g>
</svg>

<!-- line chart -->
<div class="t" style="left:1093px;top:511px;font-size:17px;color:#c58a24">Dynamics of Sales</div>
<svg class="ic" style="left:950px;top:540px" width="282" height="180" viewBox="950 540 282 180">
<g stroke="#e1e5ea" stroke-width="1.2"><path d="M1054 556h180M1054 588h180M1054 620h180M1054 652h180M1054 684h180"/></g>
<path d="M1054 684v8M1088 684v8M1122 684v8M1156 684v8M1190 684v8M1224 684v8" stroke="#dde"/>
<g font-family="Liberation Sans" font-size="13" fill="#666" text-anchor="end"><text x="1037" y="561">$20,000.00</text><text x="1037" y="593">$15,000.00</text><text x="1037" y="625">$10,000.00</text><text x="1037" y="657">$5,000.00</text><text x="1037" y="689">$-</text></g>
<polyline points="1071,684 1105,620 1139,593 1173,636 1208,669 1232,652" fill="none" stroke="#d9387a" stroke-width="2.5"/>
<polyline points="1071,684 1105,648 1139,634 1173,655 1208,678 1232,666" fill="none" stroke="#92d050" stroke-width="2.5"/>
<g font-family="Liberation Sans" font-size="13" fill="#555" text-anchor="middle"><text x="1071" y="712">1</text><text x="1105" y="712">2</text><text x="1139" y="712">3</text><text x="1173" y="712">4</text><text x="1208" y="712">5</text></g>
<path d="M1140 699h35" stroke="#92d050" stroke-width="3"/><path d="M1208 699h26" stroke="#d9387a" stroke-width="3"/>
<text x="1179" y="703" font-family="Liberation Sans" font-size="13" fill="#555">Sale</text>
</svg>

<!-- paragraph -->
<div class="t" style="left:79px;top:746px;font-size:13.5px;color:#222">Effect if in up no depend seemed. In expression an solicitude principles in do. Indulgence contrasted sufficient to unpleasant in in insensible favourable. We leaf to snug on no need. At none</div>
<div class="t" style="left:79px;top:765px;font-size:13.5px;color:#222">over will. Do play they miss give so up.</div>

<!-- table -->
<div class="a" style="left:310px;top:795px;width:922px;height:22px;background:#7a8bc4"></div>
<div id="tbl"></div>
<div class="a" style="left:77px;top:818px;width:1155px;height:110px;background:#e6f2dc"></div>
<div class="a" style="left:77px;top:818px;width:231px;height:110px;background:#92d050"></div>

<!-- month headers / grid via svg -->
<svg class="ic" style="left:77px;top:794px" width="1155" height="134" viewBox="77 794 1155 134">
<g stroke="#fff" stroke-width="2"><path d="M308 794v134M404 794v134M508 794v134M593 794v134M677 794v134M762 794v134M847 794v134M931 794v134M1019 794v134M1112 794v134M1210 794v134"/><path d="M77 818h1155M77 843h1155M77 867h1155M77 892h1155M77 916h1155"/></g>
<g font-family="Liberation Sans" font-size="13.5" fill="#fff" font-weight="bold" text-anchor="middle"><text x="356" y="811">January</text><text x="456" y="811">February</text><text x="550" y="811">March</text><text x="635" y="811">April</text><text x="719" y="811">May</text><text x="804" y="811">June</text><text x="889" y="811">July</text><text x="975" y="811">August</text><text x="1065" y="811">September</text><text x="1161" y="811">October</text><text x="1224" y="811">N</text></g>
<g font-family="Liberation Sans" font-size="13.5" fill="#fff" font-weight="bold"><text x="79" y="836">Company profit</text><text x="79" y="860">Costs of materials</text><text x="79" y="885">Overhead costs</text><text x="79" y="909">Gross margin</text><text x="79" y="932">Cost of sales</text></g>
<g font-family="Liberation Sans" font-size="13.5" fill="#222">
<g><text x="316" y="836">$</text><text x="410" y="836">$</text><text x="514" y="836">$</text><text x="599" y="836">$</text><text x="683" y="836">$</text><text x="768" y="836">$</text><text x="853" y="836">$</text><text x="937" y="836">$</text><text x="1025" y="836">$</text><text x="1118" y="836">$</text><text x="1215" y="836">$</text></g>
<g><text x="316" y="860">$</text><text x="410" y="860">$</text><text x="514" y="860">$</text><text x="599" y="860">$</text><text x="683" y="860">$</text><text x="768" y="860">$</text><text x="853" y="860">$</text><text x="937" y="860">$</text><text x="1025" y="860">$</text><text x="1118" y="860">$</text><text x="1215" y="860">$</text></g>
<g><text x="316" y="885">$</text><text x="410" y="885">$</text><text x="514" y="885">$</text><text x="599" y="885">$</text><text x="683" y="885">$</text><text x="768" y="885">$</text><text x="853" y="885">$</text><text x="937" y="885">$</text><text x="1025" y="885">$</text><text x="1118" y="885">$</text><text x="1215" y="885">$</text></g>
<g><text x="316" y="909">$</text><text x="410" y="909">$</text><text x="514" y="909">$</text><text x="599" y="909">$</text><text x="683" y="909">$</text><text x="768" y="909">$</text><text x="853" y="909">$</text><text x="937" y="909">$</text><text x="1025" y="909">$</text><text x="1118" y="909">$</text><text x="1215" y="909">$</text></g>
</g>
<g font-family="Liberation Sans" font-size="13.5" fill="#222" text-anchor="end">
<text x="400" y="836">5,640.00</text><text x="503" y="836">7,823.00</text><text x="589" y="836">4,586.00</text><text x="673" y="836">1,258.00</text><text x="757" y="836">3,658.00</text><text x="842" y="836">1,456.00</text><text x="927" y="836">2,589.00</text><text x="1014" y="836">2,694.00</text><text x="1107" y="836">2,468.00</text><text x="1204" y="836">9,543.00</text>
<text x="400" y="860">780.00</text><text x="503" y="860">540.00</text><text x="589" y="860">360.00</text><text x="673" y="860">240.00</text><text x="757" y="860">590.00</text><text x="842" y="860">640.00</text><text x="927" y="860">115.00</text><text x="1014" y="860">112.00</text><text x="1107" y="860">980.00</text><text x="1204" y="860">760.00</text>
<text x="400" y="885">450.00</text><text x="503" y="885">650.00</text><text x="589" y="885">850.00</text><text x="673" y="885">210.00</text><text x="757" y="885">320.00</text><text x="842" y="885">560.00</text><text x="927" y="885">740.00</text><text x="1014" y="885">150.00</text><text x="1107" y="885">230.00</text><text x="1204" y="885">150.00</text>
<text x="400" y="909">4,410.00</text><text x="503" y="909">6,633.00</text><text x="589" y="909">3,376.00</text><text x="673" y="909">808.00</text><text x="757" y="909">2,748.00</text><text x="842" y="909">256.00</text><text x="927" y="909">1,734.00</text><text x="1014" y="909">2,432.00</text><text x="1107" y="909">1,258.00</text><text x="1204" y="909">8,633.00</text>
<text x="400" y="932">5,085.00</text><text x="503" y="932">7,283.00</text><text x="589" y="932">3,881.00</text><text x="673" y="932">1,022.00</text><text x="757" y="932">3,338.00</text><text x="842" y="932">256.00</text><text x="927" y="932">2,474.50</text><text x="1014" y="932">2,582.00</text><text x="1107" y="932">1,868.00</text><text x="1204" y="932">8,333.00</text>
</g>
</svg>

<!-- scrollbars -->
<div class="a" style="left:1232px;top:217px;width:16px;height:711px;background:#f1f1f1;border-left:1px solid #d8d8d8"></div>
<div class="a" style="left:1234px;top:219px;width:12px;height:12px;border:1px solid #ccc;background:#f7f7f7;font-size:7px;color:#999;text-align:center;line-height:10px">▲</div>
<div class="a" style="left:1234px;top:233px;width:12px;height:280px;border:1px solid #ccc;background:#f7f7f7"></div>
<div class="a" style="left:1234px;top:912px;width:12px;height:12px;border:1px solid #ccc;background:#f7f7f7;font-size:7px;color:#999;text-align:center;line-height:10px">▼</div>
<div class="a" style="left:45px;top:928px;width:1203px;height:16px;background:#e2e2e2;border-top:1px solid #d0d0d0"></div>
<div class="a" style="left:47px;top:930px;width:12px;height:12px;border:1px solid #ccc;background:#f7f7f7;font-size:7px;color:#999;text-align:center;line-height:10px">◀</div>
<div class="a" style="left:61px;top:930px;width:40px;height:12px;border:1px solid #ccc;background:#f7f7f7;font-size:7px;color:#aaa;text-align:center;line-height:10px">||||||||</div>
<div class="a" style="left:1216px;top:930px;width:12px;height:12px;border:1px solid #ccc;background:#f7f7f7;font-size:7px;color:#999;text-align:center;line-height:10px">▶</div>

<!-- right panel -->
<div class="a" style="left:1248px;top:186px;width:272px;height:758px;background:#f1f1f1;border-left:1px solid #d0d0d0"></div>
<div class="lbl" style="left:1269px;top:196px">Fill</div>
<div class="box" style="left:1269px;top:214px;width:237px;height:25px;font-size:13px;line-height:23px;padding-left:5px">No Fill<span style="position:absolute;right:6px;font-size:10px">&#8964;</span></div>
<div class="a" style="left:1269px;top:250px;width:237px;height:1px;background:#d4d4d4"></div>
<div class="lbl" style="left:1269px;top:263px">Borders Style</div>
<div class="box" style="left:1269px;top:289px;width:113px;height:25px"><div class="a" style="left:20px;top:11px;width:72px;height:1px;background:#000"></div><span style="position:absolute;right:6px;top:3px;font-size:10px">&#8964;</span></div>
<div class="t" style="left:1409px;top:294px;font-size:13px">Color</div>
<div class="box" style="left:1452px;top:289px;width:54px;height:25px"><div class="a" style="left:2px;top:2px;width:37px;height:19px;background:#000"></div><span style="position:absolute;right:3px;top:3px;font-size:10px">&#8964;</span></div>
<div class="t" style="left:1269px;top:327px;font-size:13px;line-height:18px">Select borders you want to change<br>applying style chosen above</div>
<svg class="ic" style="left:1269px;top:372px" width="200" height="62">
<g fill="#fff" stroke="#cfcfcf"><rect x="0.5" y="0.5" width="25" height="25"/><rect x="30.5" y="0.5" width="25" height="25"/><rect x="60.5" y="0.5" width="25" height="25"/><rect x="90.5" y="0.5" width="25" height="25"/><rect x="120.5" y="0.5" width="25" height="25"/><rect x="150.5" y="0.5" width="25" height="25"/><rect x="0.5" y="35.5" width="25" height="25"/><rect x="30.5" y="35.5" width="25" height="25"/><rect x="60.5" y="35.5" width="25" height="25"/><rect x="90.5" y="35.5" width="25" height="25"/><rect x="120.5" y="35.5" width="25" height="25"/><rect x="150.5" y="35.5" width="25" height="25"/></g>
<g fill="none" stroke="#aaa" stroke-dasharray="1 1"><rect x="37" y="6" width="12" height="13"/><rect x="67" y="6" width="12" height="13"/><rect x="127" y="6" width="12" height="13"/><rect x="157" y="6" width="12" height="13"/><rect x="7" y="41" width="12" height="13"/><rect x="37" y="41" width="12" height="13"/><rect x="67" y="41" width="12" height="13"/><rect x="97" y="41" width="12" height="13"/><rect x="127" y="41" width="12" height="13"/><rect x="157" y="41" width="12" height="13"/><path d="M43 6v13M37 12.5h12M103 6v13M97 12.5h12"/></g>
<g fill="none" stroke="#222" stroke-width="1.4"><rect x="6" y="6" width="14" height="14"/><path d="M13 6v14M6 13h14M73 6v13M66 12.5h14"/><rect x="96" y="6" width="14" height="14"/><path d="M127 19l12-13M157 6l12 13M7 41v13M43 41v13M79 41v13M97 41h12M127 47.5h12M157 54h12"/></g>
</svg>
<div class="a" style="left:1269px;top:444px;width:237px;height:1px;background:#d4d4d4"></div>
<div class="lbl" style="left:1269px;top:456px">Indent</div>
<div class="box" style="left:1269px;top:473px;width:72px;height:25px;font-size:13px;line-height:23px;text-align:right;padding-right:22px">0<span style="position:absolute;right:6px;top:-1px;font-size:9px;line-height:11px">⌃<br>⌄</span></div>
<div class="lbl" style="left:1269px;top:521px">Text Orientation</div>
<div class="t" style="left:1269px;top:553px;font-size:13px">Angle</div>
<div class="box" style="left:1314px;top:548px;width:72px;height:25px;font-size:13px;line-height:23px;text-align:right;padding-right:22px">0 °<span style="position:absolute;right:6px;top:-1px;font-size:9px;line-height:11px">⌃<br>⌄</span></div>
<div class="lbl" style="left:1269px;top:596px">Text Control</div>
<div class="box" style="left:1269px;top:623px;width:17px;height:16px"></div><div class="t" style="left:1296px;top:624px;font-size:13px">Wrap text</div>
<div class="box" style="left:1269px;top:651px;width:17px;height:16px"></div><div class="t" style="left:1296px;top:652px;font-size:13px">Shrink to fit</div>
<div class="a" style="left:1269px;top:679px;width:237px;height:1px;background:#d4d4d4"></div>
<svg class="ic" style="left:1271px;top:693px" width="22" height="18"><rect x="1" y="1" width="14" height="12" fill="none" stroke="#444" stroke-width="1.3"/><path d="M1 5h14M1 9h14" stroke="#444"/><rect x="8" y="8" width="12" height="9" fill="#f1f1f1" stroke="#444" stroke-width="1.3"/><path d="M12 10l3 2.5-3 2.5" stroke="#444" fill="none"/></svg>
<div class="t" style="left:1298px;top:694px;font-size:13px">Conditional formatting <span style="font-size:9px">&#8964;</span></div>

<!-- right icon strip -->
<div class="a" style="left:1520px;top:186px;width:48px;height:758px;background:#f1f1f1;border-left:1px solid #d0d0d0"></div>
<div class="a" style="left:1521px;top:205px;width:47px;height:36px;background:#7d848c"></div>
<svg class="ic" style="left:1534px;top:215px" width="20" height="16"><rect x="1" y="2" width="18" height="12" fill="none" stroke="#fff" stroke-width="1.5"/><path d="M1 5h18M1 11h18" stroke="#fff"/></svg>
<svg class="ic" style="left:1534px;top:263px" width="20" height="14"><rect x="1" y="1" width="18" height="12" fill="none" stroke="#888" stroke-width="1.2"/><path d="M1 5h18M1 9h18M7 1v12M13 1v12" stroke="#888"/></svg>
<svg class="ic" style="left:1534px;top:306px" width="20" height="18"><path d="M1 11V2h12" stroke="#888" fill="none" stroke-width="1.3"/><ellipse cx="12" cy="12" rx="7" ry="5" fill="none" stroke="#888" stroke-width="1.3"/></svg>
<svg class="ic" style="left:1534px;top:353px" width="20" height="18"><rect x="1" y="1" width="18" height="15" fill="none" stroke="#888" stroke-width="1.3"/><path d="M2 14l5-6 4 4 3-2 5 3" stroke="#888" fill="none"/><circle cx="6" cy="5" r="1.5" fill="none" stroke="#888"/></svg>
<svg class="ic" style="left:1535px;top:399px" width="20" height="18"><rect x="1" y="12" width="4" height="4" fill="none" stroke="#888" stroke-width="1.3"/><rect x="7" y="7" width="4" height="9" fill="none" stroke="#888" stroke-width="1.3"/><rect x="13" y="2" width="4" height="14" fill="none" stroke="#888" stroke-width="1.3"/></svg>
<div class="t" style="left:1536px;top:444px;font-size:17px;color:#888;font-weight:bold">¶</div>
<div class="t" style="left:1536px;top:489px;font-size:16px;color:#888">Ta</div>
<svg class="ic" style="left:1534px;top:538px" width="22" height="20"><rect x="1" y="2" width="5" height="4" fill="none" stroke="#888"/><rect x="1" y="9" width="5" height="9" fill="none" stroke="#888"/><rect x="10" y="2" width="10" height="4" fill="none" stroke="#888"/><path d="M10 14c2 2 6 2 9-2M17 11l2 1-1 2" stroke="#888" fill="none" stroke-width="1.3"/></svg>
<svg class="ic" style="left:1534px;top:584px" width="22" height="20"><rect x="1" y="1" width="16" height="13" fill="none" stroke="#888" stroke-width="1.3"/><path d="M4 5h10M4 9h10" stroke="#888"/><path d="M11 12h10l-4 4v4l-2-1v-3z" fill="#888"/></svg>

<!-- bottom status bar -->
<div class="a" style="left:0;top:944px;width:1568px;height:30px;background:#f1f1f1;border-top:1px solid #cfcfcf"></div>
<div class="t" style="left:15px;top:950px;font-size:14px;color:#888">|◀</div>
<div class="t" style="left:44px;top:950px;font-size:14px;color:#888">◀</div>
<div class="t" style="left:74px;top:950px;font-size:14px;color:#888">▶</div>
<div class="t" style="left:100px;top:950px;font-size:14px;color:#888">▶|</div>
<div class="a" style="left:137px;top:945px;width:1px;height:29px;background:#d0d0d0"></div>
<div class="t" style="left:151px;top:946px;font-size:20px;color:#444">+</div>
<svg class="ic" style="left:181px;top:953px" width="13" height="12"><path d="M0 1h13M0 6h13M0 11h13" stroke="#444" stroke-width="1.5"/></svg>
<div class="a" style="left:210px;top:945px;width:62px;height:29px;background:#fff;border-left:1px solid #d0d0d0;border-right:1px solid #d0d0d0"></div>
<div class="a" style="left:210px;top:945px;width:62px;height:3px;background:#92d050"></div>
<div class="t c" style="left:241px;top:952px;font-size:14px;font-weight:bold;color:#333">PLAN</div>
<div class="a" style="left:341px;top:945px;width:1px;height:29px;background:#d0d0d0"></div>
<div class="a" style="left:412px;top:945px;width:1px;height:29px;background:#d0d0d0"></div>
<div class="a" style="left:482px;top:945px;width:1px;height:29px;background:#d0d0d0"></div>
<div class="t c" style="left:307px;top:952px;font-size:14px;color:#999">Sheet1</div>
<div class="t c" style="left:377px;top:952px;font-size:14px;color:#999">Sheet3</div>
<div class="t c" style="left:447px;top:952px;font-size:14px;color:#999">Sheet2</div>
<div class="a" style="left:1389px;top:960px;width:14px;height:1.5px;background:#444"></div>
<div class="t c" style="left:1461px;top:952px;font-size:13px;font-weight:bold;color:#333">Zoom 100%</div>
<div class="t" style="left:1519px;top:946px;font-size:20px;color:#444">+</div>

</div></body></html>
